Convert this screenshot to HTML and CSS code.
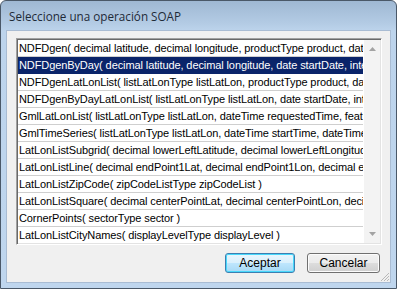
FILE: index.html
```html
<!DOCTYPE html>
<html>
<head>
<meta charset="utf-8">
<link rel="stylesheet" href="styles.css">
</head>
<body>
<div class="window">
  <div class="titlebar"><span class="title">Seleccione una operación SOAP</span></div>
  <div class="client">
    <div class="listbox">
      <div class="rows">
        <div class="row">NDFDgen( decimal latitude, decimal longitude, productType product, dateTime startTime, dateTime endTime )</div>
        <div class="row selected">NDFDgenByDay( decimal latitude, decimal longitude, date startDate, integer numDays, formatType format )</div>
        <div class="row">NDFDgenLatLonList( listLatLonType listLatLon, productType product, dateTime startTime )</div>
        <div class="row">NDFDgenByDayLatLonList( listLatLonType listLatLon, date startDate, integer numDays )</div>
        <div class="row">GmlLatLonList( listLatLonType listLatLon, dateTime requestedTime, featureTypeType featureType )</div>
        <div class="row">GmlTimeSeries( listLatLonType listLatLon, dateTime startTime, dateTime endTime )</div>
        <div class="row">LatLonListSubgrid( decimal lowerLeftLatitude, decimal lowerLeftLongitude, decimal upperRightLatitude )</div>
        <div class="row">LatLonListLine( decimal endPoint1Lat, decimal endPoint1Lon, decimal endPoint2Lat )</div>
        <div class="row">LatLonListZipCode( zipCodeListType zipCodeList )</div>
        <div class="row">LatLonListSquare( decimal centerPointLat, decimal centerPointLon, decimal distanceLat )</div>
        <div class="row">CornerPoints( sectorType sector )</div>
        <div class="row last">LatLonListCityNames( displayLevelType displayLevel )</div>
      </div>
      <div class="scrollbar">
        <svg class="arrow" width="7" height="4" viewBox="0 0 7 4"><path d="M0 4 L3.5 0 L7 4 Z" fill="#a3a3a3"/></svg>
        <svg class="arrow" width="7" height="4" viewBox="0 0 7 4"><path d="M0 0 L3.5 4 L7 0 Z" fill="#a3a3a3"/></svg>
      </div>
    </div>
    <div class="buttons">
      <button class="btn default">Aceptar</button>
      <button class="btn cancel">Cancelar</button>
    </div>
    <svg class="grip" width="10" height="10" viewBox="0 0 10 10">
      <path d="M9 1 L1 9 M9 4 L4 9 M9 7 L7 9" stroke="#b8b8b8" stroke-width="1"/>
    </svg>
  </div>
</div>
</body>
</html>
```
FILE: styles.css
```css
html, body {
  margin: 0;
  padding: 0;
  background: #ffffff;
}
.window {
  width: 397px;
  height: 289px;
  box-sizing: border-box;
  border: 1px solid #4a5868;
  border-radius: 6px 6px 0 0;
  background: linear-gradient(to bottom, #9fb8d3 0px, #b3cbe4 22px, #bdd4ec 30px, #bfd6ee 100%);
  padding: 0 5px 5px 5px;
  display: flex;
  flex-direction: column;
}
.titlebar {
  height: 29px;
  display: flex;
  align-items: center;
  padding-left: 3px;
  box-sizing: border-box;
}
.title {
  font-family: "Open Sans", "DejaVu Sans", sans-serif;
  font-size: 11.7px;
  color: #1e2a38;
}
.client {
  flex: 1;
  background: #f0f0f0;
  border: 1px solid #a9bcd3;
  position: relative;
  padding: 7px 7px 0 9px;
  display: flex;
  flex-direction: column;
}
.listbox {
  display: flex;
  width: 366px;
  height: 207px;
  box-sizing: border-box;
  border-top: 1px solid #a0a0a0;
  border-left: 1px solid #a0a0a0;
  border-right: 1px solid #ffffff;
  border-bottom: 1px solid #ffffff;
  box-shadow: inset 1px 1px 0 #696969, inset -1px -1px 0 #e3e3e3;
  background: #ffffff;
  padding: 1px;
}
.rows {
  flex: 1;
  overflow: hidden;
  display: flex;
  flex-direction: column;
}
.row {
  height: 16px;
  line-height: 16px;
  border-bottom: 1px solid #cfcfcf;
  font-family: "Liberation Sans", Arial, sans-serif;
  font-size: 11px;
  letter-spacing: -0.1px;
  color: #000000;
  white-space: nowrap;
  padding-left: 1px;
  flex-shrink: 0;
}
.row.selected {
  background: #0a246a;
  color: #ffffff;
  border-bottom-color: #0a246a;
}
.row.last {
  border-bottom: none;
}
.scrollbar {
  width: 17px;
  background: #f3f3f3;
  border-left: 1px solid #ffffff;
  display: flex;
  flex-direction: column;
  justify-content: space-between;
  align-items: center;
  padding: 7px 0 7px 0;
  box-sizing: border-box;
}
.arrow {
  display: block;
}
.buttons {
  display: flex;
  justify-content: flex-end;
  gap: 12px;
  margin-top: 8px;
  padding-right: 3px;
}
.btn {
  width: 73px;
  height: 20px;
  box-sizing: border-box;
  font-family: "Liberation Sans", Arial, sans-serif;
  font-size: 12px;
  color: #000000;
  border: 1px solid #707070;
  border-radius: 3px;
  background: linear-gradient(to bottom, #f2f2f2 0%, #ebebeb 50%, #dddddd 51%, #cfcfcf 100%);
  box-shadow: inset 0 0 0 1px #fcfcfc;
  padding: 0;
}
.btn.default {
  width: 70px;
  border-color: #3c7fb1;
  background: linear-gradient(to bottom, #eaf6fd 0%, #d9f0fc 50%, #bee6fd 51%, #a7d9f5 100%);
  box-shadow: inset 0 0 0 1px #48d8fb;
}
.grip {
  position: absolute;
  right: 0;
  bottom: 0;
}
```
